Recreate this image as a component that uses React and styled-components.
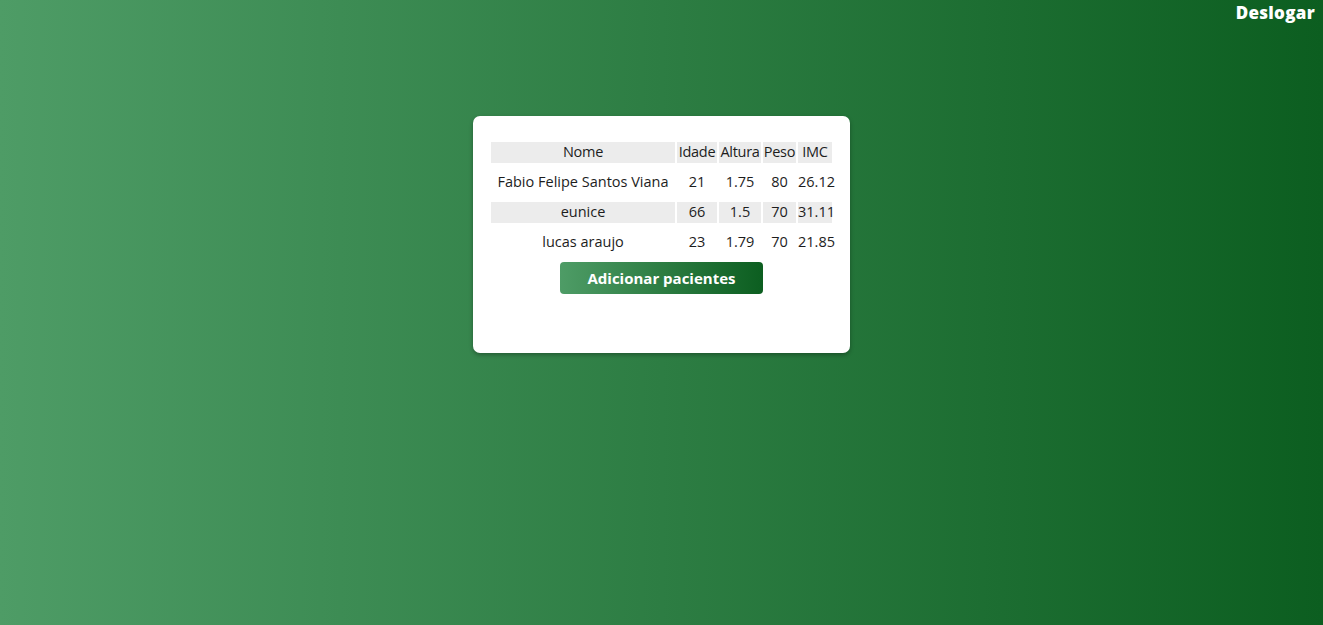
import styled, { createGlobalStyle } from 'styled-components';

const GlobalStyle = createGlobalStyle`
  html, body {
    margin: 0;
    padding: 0;
    height: 100%;
  }
  body {
    font-family: 'Open Sans', 'Liberation Sans', sans-serif;
    background: linear-gradient(90deg, #4e9c66 0%, #0c5e20 100%);
    min-height: 625px;
  }
`;

const Page = styled.div`
  min-height: 625px;
  display: flex;
  flex-direction: column;
`;

const Header = styled.header`
  display: flex;
  justify-content: flex-end;
  padding: 1px 8px 0 0;
`;

const LogoutButton = styled.button`
  background: none;
  border: none;
  padding: 0;
  color: #fff;
  font-family: 'Open Sans', sans-serif;
  font-weight: 800;
  font-size: 17px;
  line-height: 24px;
  letter-spacing: 0.3px;
  cursor: pointer;
`;

const Main = styled.main`
  display: flex;
  justify-content: center;
  padding-top: 91px;
`;

const Card = styled.div`
  width: 377px;
  height: 237px;
  box-sizing: border-box;
  background: #fff;
  border-radius: 7px;
  box-shadow: 0 2px 4px rgba(0, 0, 0, 0.3);
  padding: 17px 16px 0;
  display: flex;
  flex-direction: column;
  align-items: center;
`;

const Table = styled.table`
  border-spacing: 2px 9px;
  table-layout: fixed;
  width: 345px;
`;

const Cell = styled.td`
  box-sizing: border-box;
  height: 21px;
  padding: 0 0 2px;
  text-align: center;
  font-size: 14.5px;
  line-height: 19px;
  color: #1d1d1d;
  white-space: nowrap;
  background: ${p => (p.$shaded ? '#ececec' : 'transparent')};
`;

const HeadCell = styled(Cell).attrs({ as: 'th' })`
  font-weight: 400;
  letter-spacing: -0.3px;
`;

const AddButton = styled.button`
  margin-top: 0;
  width: 203px;
  height: 32px;
  border: none;
  border-radius: 4px;
  background: linear-gradient(90deg, #4e9c66 0%, #0c5e20 100%);
  color: #fff;
  font-family: 'Open Sans', sans-serif;
  font-weight: 700;
  font-size: 15px;
  cursor: pointer;
`;

const COLS = [184, 40, 42, 33, 34];

const PATIENTS = [
  { nome: 'Fabio Felipe Santos Viana', idade: 21, altura: '1.75', peso: 80, imc: '26.12' },
  { nome: 'eunice', idade: 66, altura: '1.5', peso: 70, imc: '31.11' },
  { nome: 'lucas araujo', idade: 23, altura: '1.79', peso: 70, imc: '21.85' },
];

export default function App() {
  return (
    <>
      <GlobalStyle />
      <Page>
        <Header>
          <LogoutButton>Deslogar</LogoutButton>
        </Header>
        <Main>
          <Card>
            <Table>
              <colgroup>
                {COLS.map((w, i) => (
                  <col key={i} style={{ width: w }} />
                ))}
              </colgroup>
              <thead>
                <tr>
                  {['Nome', 'Idade', 'Altura', 'Peso', 'IMC'].map(h => (
                    <HeadCell key={h} $shaded>{h}</HeadCell>
                  ))}
                </tr>
              </thead>
              <tbody>
                {PATIENTS.map((p, i) => {
                  const shaded = i % 2 === 1;
                  return (
                    <tr key={p.nome}>
                      <Cell $shaded={shaded}>{p.nome}</Cell>
                      <Cell $shaded={shaded}>{p.idade}</Cell>
                      <Cell $shaded={shaded}>{p.altura}</Cell>
                      <Cell $shaded={shaded}>{p.peso}</Cell>
                      <Cell $shaded={shaded}>{p.imc}</Cell>
                    </tr>
                  );
                })}
              </tbody>
            </Table>
            <AddButton>Adicionar pacientes</AddButton>
          </Card>
        </Main>
      </Page>
    </>
  );
}
